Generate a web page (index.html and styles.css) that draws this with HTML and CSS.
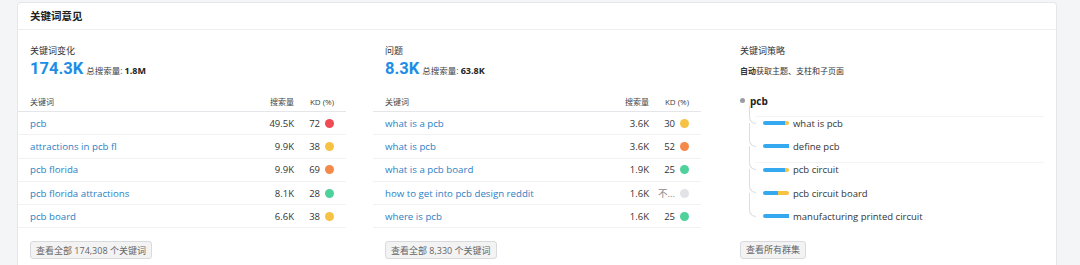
FILE: index.html
```html
<!DOCTYPE html>
<html lang="zh-CN">
<head>
  <meta charset="UTF-8">
  <title>关键词意见</title>
  <link rel="stylesheet" href="styles.css">
</head>
<body>

  <div class="page">
    <div class="card">
      <div class="card-head">关键词意见</div>

      <div class="card-body">
        <!-- 关键词变化 -->
        <div class="col">
          <div class="label">关键词变化</div>
          <div class="big-row"><span class="big">174.3K</span><span class="total">总搜索量: <b>1.8M</b></span></div>
          <table class="kw">
            <tr><th class="kw-name">关键词</th><th class="kw-vol">搜索量</th><th class="kw-kd">KD (%)</th></tr>
            <tr><td class="kw-name"><a>pcb</a></td><td class="kw-vol">49.5K</td><td class="kw-kd">72<i class="dot red"></i></td></tr>
            <tr><td class="kw-name"><a>attractions in pcb fl</a></td><td class="kw-vol">9.9K</td><td class="kw-kd">38<i class="dot yellow"></i></td></tr>
            <tr><td class="kw-name"><a>pcb florida</a></td><td class="kw-vol">9.9K</td><td class="kw-kd">69<i class="dot orange"></i></td></tr>
            <tr><td class="kw-name"><a>pcb florida attractions</a></td><td class="kw-vol">8.1K</td><td class="kw-kd">28<i class="dot green"></i></td></tr>
            <tr><td class="kw-name"><a>pcb board</a></td><td class="kw-vol">6.6K</td><td class="kw-kd">38<i class="dot yellow"></i></td></tr>
          </table>
          <button class="more-btn">查看全部 174,308 个关键词</button>
        </div>

        <!-- 问题 -->
        <div class="col">
          <div class="label">问题</div>
          <div class="big-row"><span class="big">8.3K</span><span class="total">总搜索量: <b>63.8K</b></span></div>
          <table class="kw">
            <tr><th class="kw-name">关键词</th><th class="kw-vol">搜索量</th><th class="kw-kd">KD (%)</th></tr>
            <tr><td class="kw-name"><a>what is a pcb</a></td><td class="kw-vol">3.6K</td><td class="kw-kd">30<i class="dot yellow"></i></td></tr>
            <tr><td class="kw-name"><a>what is pcb</a></td><td class="kw-vol">3.6K</td><td class="kw-kd">52<i class="dot orange"></i></td></tr>
            <tr><td class="kw-name"><a>what is a pcb board</a></td><td class="kw-vol">1.9K</td><td class="kw-kd">25<i class="dot green"></i></td></tr>
            <tr><td class="kw-name"><a>how to get into pcb design reddit</a></td><td class="kw-vol">1.6K</td><td class="kw-kd"><span class="na">不...</span><i class="dot grey"></i></td></tr>
            <tr><td class="kw-name"><a>where is pcb</a></td><td class="kw-vol">1.6K</td><td class="kw-kd">25<i class="dot green"></i></td></tr>
          </table>
          <button class="more-btn">查看全部 8,330 个关键词</button>
        </div>

        <!-- 关键词策略 -->
        <div class="col">
          <div class="label">关键词策略</div>
          <div class="sub"><b>自动</b>获取主题、支柱和子页面</div>
          <div class="tree">
            <div class="root"><i class="root-dot"></i>pcb</div>
            <ul class="branches">
              <li class="line"><span class="bar"><i class="b" style="width:22px"></i><i class="y" style="width:4px"></i></span>what is pcb</li>
              <li><span class="bar"><i class="b" style="width:26px"></i></span>define pcb</li>
              <li class="line"><span class="bar"><i class="b" style="width:22px"></i><i class="y" style="width:4px"></i></span>pcb circuit</li>
              <li><span class="bar"><i class="b" style="width:15px"></i><i class="y" style="width:11px"></i></span>pcb circuit board</li>
              <li><span class="bar"><i class="b" style="width:26px"></i></span>manufacturing printed circuit</li>
            </ul>
          </div>
          <button class="more-btn">查看所有群集</button>
        </div>
      </div>
    </div>
  </div>

</body>
</html>
```

FILE: styles.css
```css
body {
  margin: 0;
  background: #f4f5f7;
  font-family: "Open Sans", "Noto Sans CJK SC", sans-serif;
  color: #333;
  overflow: hidden;
}

.page {
  padding: 2px 0 0 17px;
}

.card {
  width: 1038px;
  height: 262px;
  background: white;
  border: 1px solid #e6e7ea;
  border-bottom: none;
  border-radius: 4px 4px 0 0;
}

.card-head {
  height: 26px;
  line-height: 26px;
  padding: 0 12px;
  font-size: 10.5px;
  font-weight: bold;
  color: #222;
  border-bottom: 1px solid #eceef0;
}

.card-body {
  display: grid;
  grid-template-columns: 328px 328px 328px;
  gap: 27px;
}

.col {
  padding-top: 14px;
}

.label {
  font-size: 9px;
  line-height: 14px;
  padding-left: 12px;
  color: #333;
}

.big-row {
  margin-top: 1px;
  padding-left: 12px;
  height: 22px;
  display: flex;
  align-items: baseline;
}

.big {
  font-family: Roboto, sans-serif;
  font-size: 16.5px;
  font-weight: bold;
  color: #1b8ee6;
  margin-right: 3px;
}

.total {
  font-size: 8.5px;
  color: #444;
}

.total b {
  color: #222;
  font-size: 9px;
}

/* 关键词表 */
.kw {
  width: 100%;
  margin-top: 10px;
  border-collapse: collapse;
  font-size: 9.5px;
}

.kw th {
  height: 20px;
  padding: 0;
  font-weight: normal;
  font-size: 8px;
  color: #444;
  border-bottom: 1px solid #e4e6e9;
  vertical-align: middle;
}

.kw td {
  height: 22.3px;
  padding: 0;
  border-bottom: 1px solid #f1f2f4;
}

.kw-name {
  text-align: left;
  padding-left: 12px !important;
}

.kw-name a {
  color: #2b7fc4;
  font-size: 9.7px;
}

.kw-vol {
  text-align: right;
  color: #333;
  width: 70px;
}

.kw-kd {
  text-align: right;
  width: 40px;
  padding-right: 12px !important;
  color: #333;
  white-space: nowrap;
}

.na {
  color: #888;
}

.dot {
  display: inline-block;
  width: 9px;
  height: 9px;
  border-radius: 50%;
  margin-left: 5px;
  vertical-align: -1px;
}

.red { background: #f04a55; }
.yellow { background: #f7c244; }
.orange { background: #f5894a; }
.green { background: #4fd19b; }
.grey { background: #e2e3e6; }

.more-btn {
  display: block;
  margin: 13px 0 0 12px;
  height: 18px;
  padding: 0 5px;
  font-family: "Open Sans", "Noto Sans CJK SC", sans-serif;
  font-size: 9px;
  color: #666;
  background: #f3f3f4;
  border: 1px solid #d9dadd;
  border-radius: 3px;
}

/* 关键词策略 */
.sub {
  margin-top: 6px;
  padding-left: 12px;
  font-size: 8px;
  line-height: 14px;
  color: #333;
}

.tree {
  margin: 11.5px 12px 0 0;
  padding-left: 12px;
}

.root {
  height: 22px;
  font-size: 10px;
  font-weight: bold;
  color: #222;
  display: flex;
  align-items: center;
}

.root-dot {
  width: 5px;
  height: 5px;
  border-radius: 50%;
  background: #9a9ca0;
  margin-right: 5px;
}

.branches {
  list-style: none;
  margin: 0;
  padding: 0 0 0 23px;
}

.branches li {
  position: relative;
  height: 23.3px;
  font-size: 9.5px;
  color: #333;
  display: flex;
  align-items: center;
}

.branches li::before {
  content: "";
  position: absolute;
  left: -14px;
  top: -12px;
  width: 6px;
  height: 23px;
  border-left: 1px solid #dcdde0;
  border-bottom: 1px solid #dcdde0;
  border-bottom-left-radius: 7px;
}

.branches li:first-child::before {
  top: -6px;
  height: 17px;
}

.branches li.line::after {
  content: "";
  position: absolute;
  left: -8px;
  right: 0;
  top: 4px;
  border-top: 1px solid #f3f4f6;
}

.bar {
  display: flex;
  width: 26px;
  height: 4px;
  margin-right: 4px;
}

.bar i {
  display: block;
  height: 4px;
}

.bar .b {
  background: #35a9ef;
  border-radius: 2px 0 0 2px;
}

.bar .y {
  background: #f7c244;
  border-radius: 0 2px 2px 0;
}
```
